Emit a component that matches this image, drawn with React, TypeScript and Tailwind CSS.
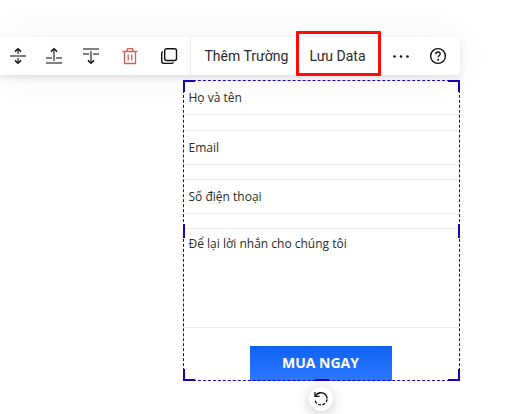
import React from 'react';

type IconProps = { children: React.ReactNode; className?: string };

const Icon = ({ children, className = '' }: IconProps) => (
  <svg className={`block h-[18px] w-[18px] shrink-0 ${className}`} viewBox="0 0 18 18" fill="none">
    {children}
  </svg>
);

const MoveVertical = () => (
  <Icon>
    <path d="M1 9h16" stroke="#808080" strokeWidth="2" />
    <path d="M9 7V2M9 11v5" stroke="#555" strokeWidth="1.6" />
    <path d="M6 4.6 9 1.8l3 2.8M6 13.4l3 2.8 3-2.8" stroke="#111" strokeWidth="1.5" />
  </Icon>
);

const MoveUp = () => (
  <Icon>
    <path d="M1 16h16M1 11h6M11 11h6" stroke="#808080" strokeWidth="2" />
    <path d="M9 14V2" stroke="#777" strokeWidth="1.9" />
    <path d="M6 4.6 9 1.8l3 2.8" stroke="#111" strokeWidth="1.5" />
  </Icon>
);

const MoveDown = () => (
  <Icon>
    <path d="M1 2h16M1 7h6M11 7h6" stroke="#808080" strokeWidth="2" />
    <path d="M9 4v12" stroke="#777" strokeWidth="1.9" />
    <path d="m6 13.4 3 2.8 3-2.8" stroke="#111" strokeWidth="1.5" />
  </Icon>
);

const Trash = () => (
  <Icon>
    <path d="M1.5 4.5h15M3.5 4.5v12h11v-12M5.5 4.2l1-2.5h5l1 2.5M7.2 7.5v6M10.8 7.5v6" stroke="#dc5b52" strokeWidth="1.3" strokeLinejoin="round" />
  </Icon>
);

const Copy = () => (
  <Icon>
    <rect x="4.7" y="1.7" width="11.8" height="11.8" rx="2" stroke="#111" strokeWidth="1.4" />
    <path d="M2.8 4.5c-.7.4-1.1 1-1.1 1.8V14c0 1.5 1 2.4 2.5 2.4h7.2c1 0 1.7-.4 2.2-1" stroke="#111" strokeWidth="1.4" />
  </Icon>
);

const Dots = () => (
  <Icon>
    <g fill="#111">
      <circle cx="2.5" cy="9.5" r="1.25" />
      <circle cx="9" cy="9.5" r="1.25" />
      <circle cx="15.5" cy="9.5" r="1.25" />
    </g>
  </Icon>
);

const Help = () => (
  <Icon>
    <circle cx="9" cy="9" r="7.4" stroke="#111" strokeWidth="1.4" />
    <path d="M6.8 7.2C6.8 5.8 7.8 5 9 5s2.2.8 2.2 2.1c0 1.5-2.1 1.7-2.1 3.2" stroke="#111" strokeWidth="1.3" />
    <circle cx="9.1" cy="12.8" r="1" fill="#111" />
  </Icon>
);

const HANDLES = [
  'left-0 top-0 h-3 w-3 border-l-2 border-t-2',
  'right-0 top-0 h-3 w-3 border-r-2 border-t-2',
  'left-0 bottom-0 h-3 w-3 border-l-2 border-b-2',
  'right-0 bottom-0 h-3 w-3 border-r-2 border-b-2',
  'left-0 top-[144px] h-[14px] border-l-2',
  'right-0 top-[144px] h-[14px] border-l-2',
  'left-[132px] bottom-0 w-[14px] border-b-2',
];

export default function App() {
  return (
    <div className="h-[414px] w-[530px] overflow-hidden bg-white pt-[37px] text-[#111]">
      <div className="relative flex h-[38px] w-[460px] items-center rounded-r-sm bg-white font-['Roboto',sans-serif] text-[14px] text-[#2a2a2a] shadow-[0_3px_7px_rgba(0,0,0,0.10),0_0_44px_rgba(0,0,0,0.055)]">
        <div className="flex h-full w-[191px] shrink-0 items-center border-r border-[#eeeeee] pl-[9px]">
          <MoveVertical />
          <span className="w-[18px]" />
          <MoveUp />
          <span className="w-[19px]" />
          <MoveDown />
          <span className="w-[21px]" />
          <Trash />
          <span className="w-[21px]" />
          <Copy />
        </div>
        <span className="ml-[13.5px] w-[91.5px] shrink-0 whitespace-nowrap">Thêm Trường</span>
        <div className="-mt-[6px] flex h-[45px] w-[85px] shrink-0 items-center justify-center self-start whitespace-nowrap rounded-[1px] border-[3px] border-[#ff0909] pr-[2px] pt-[5px]">
          Lưu Data
        </div>
        <span className="w-[11px]" />
        <Dots />
        <span className="w-[19px]" />
        <Help />
      </div>

      <div className="relative ml-[183px] mt-[5px] h-[301px] w-[277px] font-['Open_Sans',sans-serif] text-[12px] text-[#2a2a2a]">
        <div className="flex h-[35px] items-center border-b border-[#ececec] pl-[5.5px] pt-[2px]">Họ và tên</div>
        <div className="mt-[15px] border-t border-[#ececec]">
          <div className="flex h-[34px] items-center border-b border-[#ececec] pl-[5.5px]">Email</div>
        </div>
        <div className="mt-[14px] border-t border-[#ececec]">
          <div className="flex h-[34px] items-center border-b border-[#ececec] pl-[5.5px]">Số điện thoại</div>
        </div>
        <div className="mt-[14px] h-[100px] border-y border-[#ececec] pl-[5.5px] pt-[6px] leading-[18px]">
          Để lại lời nhắn cho chúng tôi
        </div>
        <button className="ml-[67px] mt-[18px] flex h-[35px] w-[142px] items-center justify-center bg-linear-to-b from-[#0d61f2] to-[#2d78ff] pb-[2px] pr-px text-[14px] font-bold text-white">
          MUA NGAY
        </button>
        <div className="pointer-events-none absolute inset-0 border border-dashed border-[#1c00b8]" />
        {HANDLES.map((place) => (
          <i key={place} className={`absolute border-[#1c00b8] ${place}`} />
        ))}
        <div className="absolute left-[126px] top-[307px] flex h-6 w-6 items-center justify-center rounded-full bg-white shadow-[0_2px_14px_rgba(0,0,0,0.22)]">
          <svg className="h-4 w-4" viewBox="0 0 16 16" fill="none" stroke="#111" strokeWidth="1.3">
            <path d="M2.6 4.8A6.2 6.2 0 0 1 14.1 7.6" />
            <path d="M14.1 8.4A6.2 6.2 0 0 1 1.8 8.6" strokeDasharray="3 1.4" />
            <path d="M2 .9v4.5h4.6" />
          </svg>
        </div>
      </div>
    </div>
  );
}
